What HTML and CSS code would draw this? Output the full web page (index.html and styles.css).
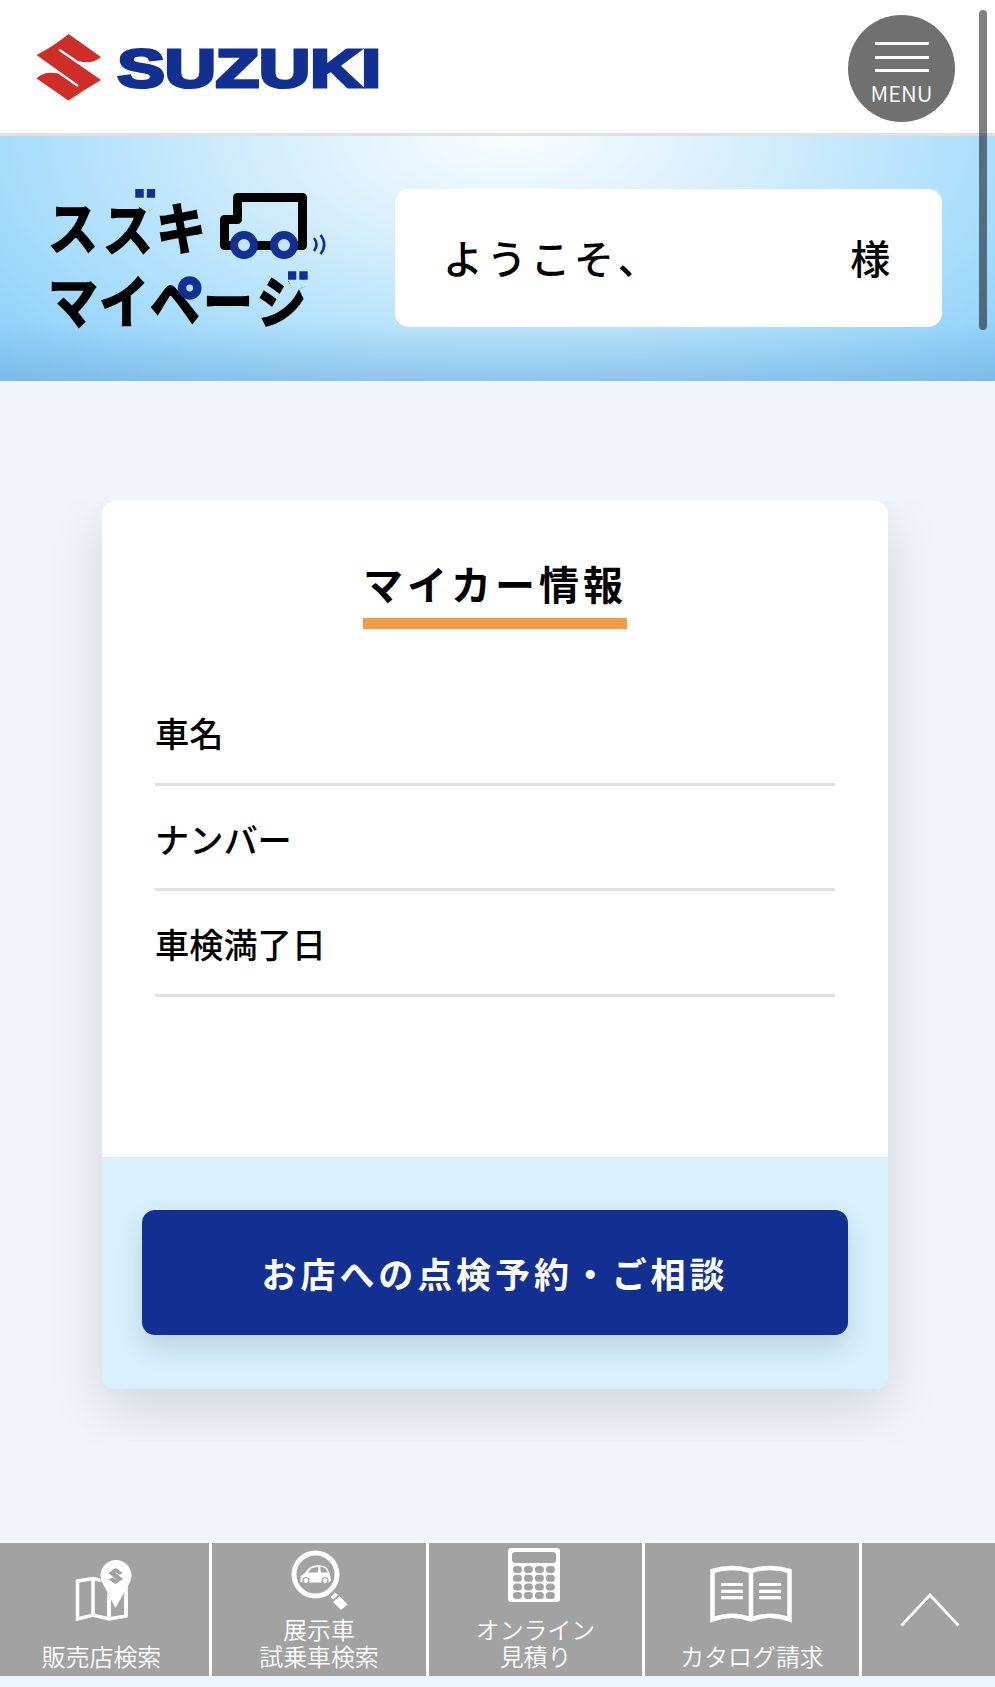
FILE: index.html
```html
<!DOCTYPE html>
<html lang="ja">
<head>
<meta charset="utf-8">
<title>スズキマイページ</title>
<link rel="stylesheet" href="styles.css">
</head>
<body>
<header class="header">
  <svg class="brand" width="350" height="70" viewBox="35 33 350 70" role="img" aria-label="SUZUKI">
    <path class="brand-mark" d="M68.500 34L101 57Q92 65 78 61L59.500 48.500L58.500 50.500L101 80Q84 90 68.500 100.500L36.500 78.500Q44 70.500 58 73.500L77.500 87L78.500 85L36.500 55Q54 46 68.500 34Z"/>
    <text class="brand-name" x="117.500" y="87" textLength="263.500" lengthAdjust="spacingAndGlyphs">SUZUKI</text>
  </svg>
  <button class="menu">
    <span class="menu-bar"></span><span class="menu-bar"></span><span class="menu-bar"></span>
    <span class="menu-text">MENU</span>
  </button>
</header>
<div class="scrollbar"></div>
<section class="hero">
  <svg class="mypage" width="285" height="175" viewBox="45 176 285 175">
    <defs>
      <mask id="marks" maskUnits="userSpaceOnUse" x="0" y="150" width="400" height="220">
        <rect y="150" width="400" height="220" fill="#fff"/>
        <path d="M135 195V209L141 213L146 215.800L156 214V195Z"/>
        <circle cx="189.200" cy="293.200" r="8"/>
        <path d="M287 275V283L293 297L297 295.500L299.300 293.400L302 292.800L308 290.500V275Z"/>
      </mask>
    </defs>
    <text class="mypage-text" transform="matrix(1 0 0 1.120 0 -30.200)" mask="url(#marks)" y="249" x="48 104 156">スズキ</text>
    <text class="mypage-text" transform="matrix(1 0 0 1.130 0 -43)" mask="url(#marks)" y="324" x="48 99 150 203 257">マイページ</text>
    <path class="mark" d="M135.300 189h8.500v8.800h-8.500zM146.800 189h8.300v8.800h-8.300zM288 271.300h8.300v8.500H288zM299.300 271.300h8.400v8.500h-8.400z"/>
    <circle class="ring" cx="189.700" cy="288" r="7.600"/>
    <path class="car" d="M224.500 245.500V219.500H237.500V197.500H302.500V245.500Z"/>
    <circle class="wheel" cx="244" cy="245" r="10"/>
    <circle class="wheel" cx="284" cy="245" r="10"/>
    <path class="wave" d="M314 238Q319 244.500 314 251M320.500 235Q328 244.500 320.500 254"/>
  </svg>
  <div class="welcome"><span>ようこそ、</span><span class="sama">様</span></div>
</section>
<main class="main">
  <section class="card-area">
    <div class="card">
      <div class="card-body">
        <h1 class="title">マイカー情報</h1>
        <dl class="info">
          <dt class="info-row">車名</dt>
          <dt class="info-row">ナンバー</dt>
          <dt class="info-row">車検満了日</dt>
        </dl>
      </div>
      <div class="card-foot"><a class="reserve">お店への点検予約・ご相談</a></div>
    </div>
  </section>
</main>
<nav class="nav">
  <a class="nav-item nav-shop">
    <svg class="icon-map" width="58" height="62" viewBox="74 1560 58 62">
      <path class="line" d="M76.500 1581L92 1578.500L108 1582L125 1578V1616L108 1619L92 1615L76.500 1619ZM92 1579V1615M108 1583V1619"/>
      <path class="gap" d="M115 1608L101 1584Q97 1575 100 1568Q105 1560 115 1560Q126 1561 131 1570V1584Z"/>
      <path class="line" d="M108 1598V1618M125 1586V1616"/>
      <path class="solid" d="M114.500 1608L102 1584A15.500 15.500 0 1 1 128 1584Z"/>
      <path class="cut" d="M114.500 1568L122 1573Q119 1575 116.500 1573.500L113 1571.500L122 1579L114.500 1584L107.500 1579.500Q110 1577 113 1578.500L116 1580.500L107.500 1573Z"/>
    </svg>
    <span>販売店検索</span>
  </a>
  <a class="nav-item">
    <svg class="icon-search" width="58" height="62" viewBox="290 1550 58 62">
      <circle class="lens" cx="315.500" cy="1575.500" r="21.500"/>
      <path class="solid" d="M300.500 1583V1577L305 1574Q309 1567 315 1566.500Q323 1565.500 327 1569L330 1575L331 1582L328 1583.500H303Z"/>
      <path class="cut" d="M308 1573.500L311 1569.500Q314 1568 318 1568V1573.500ZM320 1568Q324 1568 326 1570L328 1573.500H321Z"/>
      <circle class="tyre" cx="306" cy="1581.500" r="3"/><circle class="tyre" cx="325" cy="1581.500" r="3"/>
      <path class="solid" d="M335 1593.500L338 1596L333.500 1600.500L330.500 1598ZM339.500 1597L347.500 1605.500L341 1611L333 1603Z"/>
    </svg>
    <span class="label">展示車</span>
    <span class="label">試乗車検索</span>
  </a>
  <a class="nav-item">
    <svg class="icon-calc" width="52" height="54" viewBox="0 0 52 54">
      <rect class="solid" width="52" height="54" rx="3"/>
      <rect class="cut" x="4" y="4" width="44" height="11" rx="3.500"/>
      <path class="keys" d="M8.500 21.500h2m8.900 0h2m9 0h2m9 0h2M8.500 30.200h2m8.900 0h2m9 0h2m9 0h2M8.500 39h2m8.900 0h2m9 0h2m9 0h2M8.500 47.500h2m8.900 0h2m9 0h2m9 0h2"/>
    </svg>
    <span class="label">オンライン</span>
    <span class="label">見積り</span>
  </a>
  <a class="nav-item">
    <svg class="icon-book" width="82" height="58" viewBox="0 -1 82 58">
      <path class="page" d="M41 5Q22-1 2.500 5V53.500Q22 46 41 53.500Q60 46 79.500 53.500V5Q60-1 41 5V54"/>
      <path class="rules" d="M11 18.500h22M11 25.300h22M11 31.700h22M49 18.500h22M49 25.300h22M49 31.700h22"/>
    </svg>
    <span>カタログ請求</span>
  </a>
  <a class="nav-item nav-top">
    <svg width="60" height="34" viewBox="0 0 60 34"><path class="chevron" d="M1.500 32.500L30 2L58.500 32.500"/></svg>
  </a>
</nav>
</body>
</html>
```
FILE: styles.css
```css
* { box-sizing: border-box; }
body {
  margin: 0;
  height: 1687px;
  display: flex;
  flex-direction: column;
  overflow: hidden;
  background: #f1f5fb;
  color: #000;
  font-family: "Noto Sans CJK JP", sans-serif;
}
.header {
  height: 136px;
  flex: none;
  display: flex;
  justify-content: space-between;
  align-items: flex-start;
  padding: 15px 40px 0 35px;
  border-bottom: 3px solid #e0e0e0;
  background: #fff;
}
.brand { margin-top: 18px; }
.brand-mark { fill: #cf2e28; }
.brand-name {
  font: bold 54.500px "Liberation Sans", Arial, sans-serif;
  fill: #113091;
  stroke: #113091;
  stroke-width: 3.200px;
}
.menu {
  width: 107px;
  height: 107px;
  border: 0;
  border-radius: 50%;
  padding: 27px 0 0;
  display: flex;
  flex-direction: column;
  align-items: center;
  gap: 10.500px;
  background: #707070;
  color: #fff;
  font-family: inherit;
}
.menu-bar { width: 54px; height: 3px; background: #fff; }
.menu-text { margin-top: -3px; font-size: 22px; line-height: 24px; font-weight: 350; }
.scrollbar {
  position: absolute;
  z-index: 2;
  left: 979px;
  top: 10px;
  width: 8px;
  height: 320px;
  border-radius: 4px;
  background: rgba(0, 0, 0, .5);
}
.hero {
  height: 245px;
  flex: none;
  display: flex;
  justify-content: space-between;
  align-items: flex-start;
  padding: 40px 53px 0 45px;
  background:
    linear-gradient(to bottom, rgba(90, 150, 200, 0) 76%, rgba(90, 150, 200, .32)),
    radial-gradient(ellipse 690px 345px at 510px 0, #fafdff 0, #d5eefc 35%, #aadefc 70%, #8acdf9 100%);
}
.mypage-text { font-size: 50px; font-weight: 700; fill: #000; stroke: #000; stroke-width: 1.500px; }
.mark { fill: #113091; }
.ring { fill: none; stroke: #113091; stroke-width: 8.400px; }
.car { fill: none; stroke: #000; stroke-width: 9px; stroke-linejoin: round; }
.wheel { fill: #c3e7fd; stroke: #113091; stroke-width: 8px; }
.wave { fill: none; stroke: #113091; stroke-width: 2.500px; }
.welcome {
  width: 547px;
  height: 138px;
  display: flex;
  justify-content: space-between;
  align-items: center;
  margin-top: 13px;
  padding: 0 48px 2px 48px;
  border-radius: 14px;
  background: #fff;
  font-size: 40px;
  font-weight: 500;
  letter-spacing: 3.700px;
}
.main { height: 1162px; flex: none; padding-top: 120px; }
.card-area { height: 941px; overflow: hidden; padding: 0 107px 0 102px; }
.card { border-radius: 13px; box-shadow: 0 20px 54px rgba(0, 0, 0, .13); }
.card-body {
  height: 656px;
  padding: 53px 53px 0 53px;
  border-radius: 13px 13px 0 0;
  background: #fff;
}
.title {
  width: 264px;
  margin: 0 auto;
  height: 75px;
  border-bottom: 11px solid #f09c4b;
  font-size: 40px;
  line-height: 58px;
  font-weight: 700;
  letter-spacing: 4px;
  white-space: nowrap;
}
.info { margin: 51px 0 0; }
.info-row {
  height: 105.700px;
  padding-top: 27px;
  border-bottom: 3px solid #e0e0e0;
  font-size: 34.200px;
  line-height: 50px;
  font-weight: 500;
}
.card-foot {
  height: 232px;
  padding: 53px 40px 0;
  border-radius: 0 0 13px 13px;
  background: #d8f0fd;
}
.reserve {
  height: 125px;
  display: flex;
  justify-content: center;
  align-items: center;
  border-radius: 13px;
  background: #113091;
  box-shadow: 0 13px 27px rgba(0, 0, 0, .13);
  color: #fff;
  font-size: 35px;
  font-weight: 700;
  letter-spacing: 3.900px;
}
.nav {
  height: 144px;
  flex: none;
  display: grid;
  grid-template-columns: 209px 214px 213px 214px 1fr;
  column-gap: 3px;
  border-bottom: 11px solid #ebf5fe;
  background: #fff;
}
.nav-item {
  display: flex;
  flex-direction: column;
  justify-content: flex-end;
  align-items: center;
  padding-bottom: 7px;
  background: #a2a2a2;
  color: #fff;
  font-size: 23.900px;
  line-height: 26.500px;
  font-weight: 350;
  text-align: center;
}
.nav-shop { padding-right: 6px; }
.nav-top { justify-content: center; padding: 0 0 0 3px; }
.icon-map { margin: 0 0 21px 4px; }
.icon-search { margin: 0 0 5px; }
.icon-calc { margin: 0 3px 14px 0; }
.icon-book { margin: 0 2px 20px 0; }
.solid { fill: #fff; }
.cut { fill: #a2a2a2; }
.line, .lens, .page, .rules, .chevron { fill: none; stroke: #fff; }
.line { stroke-width: 3.500px; }
.gap { fill: #a2a2a2; }
.lens { stroke-width: 5px; }
.tyre { fill: #fff; stroke: #a2a2a2; stroke-width: 1.200px; }
.keys { stroke: #a2a2a2; stroke-width: 7px; stroke-linecap: round; }
.page { stroke-width: 4.500px; }
.rules { stroke-width: 3.200px; }
.chevron { stroke-width: 2.700px; }
```
